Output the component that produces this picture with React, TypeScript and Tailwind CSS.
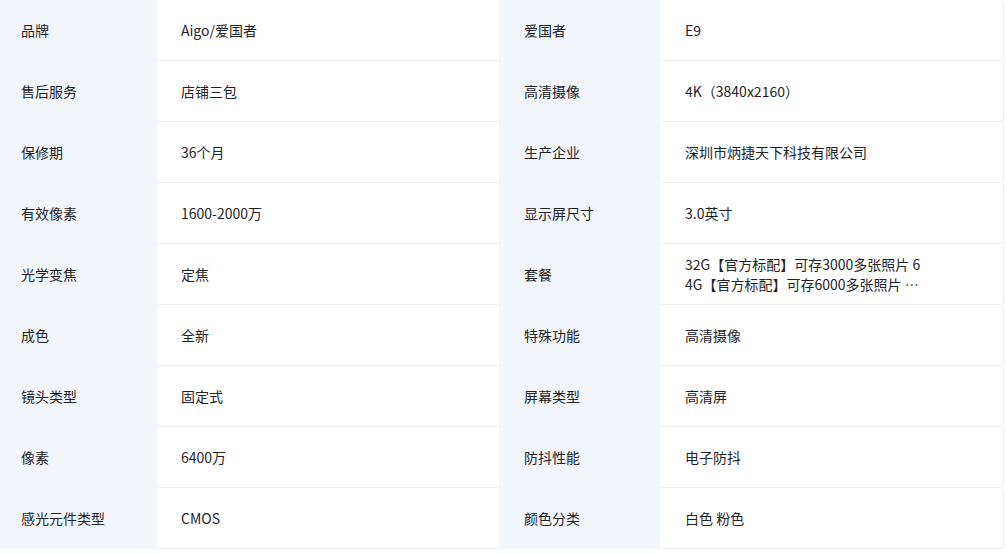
import React from "react";

const rows: [string, string, string, string][] = [
  ["品牌", "Aigo/爱国者", "爱国者", "E9"],
  ["售后服务", "店铺三包", "高清摄像", "4K（3840x2160）"],
  ["保修期", "36个月", "生产企业", "深圳市炳捷天下科技有限公司"],
  ["有效像素", "1600-2000万", "显示屏尺寸", "3.0英寸"],
  ["光学变焦", "定焦", "套餐", "32G【官方标配】可存3000多张照片 64G【官方标配】可存6000多张照片 128G【官方标配】可存12000多张照片"],
  ["成色", "全新", "特殊功能", "高清摄像"],
  ["镜头类型", "固定式", "屏幕类型", "高清屏"],
  ["像素", "6400万", "防抖性能", "电子防抖"],
  ["感光元件类型", "CMOS", "颜色分类", "白色 粉色"],
];

export default function App() {
  return (
    <div
      className="w-[1007px] h-[554px] bg-white text-[14px] text-[#1f2329]"
      style={{ fontFamily: '"Noto Sans CJK SC", "Noto Sans", sans-serif' }}
    >
      <div className="w-[1004px] flex flex-col">
        {rows.map((r, i) => (
          <div key={i} className="grid grid-cols-[157px_342px_161px_344px] h-[61px]">
            <div className="bg-[#f2f5f9] flex items-center pl-[21px]">{r[0]}</div>
            <div className="border-b border-[#eef0f3] flex items-center pl-[24px]">{r[1]}</div>
            <div className="bg-[#f2f5f9] flex items-center pl-[25px]">{r[2]}</div>
            <div className="border-b border-r border-[#eef0f3] rounded-r-[4px] flex items-center pl-[25px]">
              <span className="max-w-[236px] break-all line-clamp-2 leading-[20px]">{r[3]}</span>
            </div>
          </div>
        ))}
      </div>
    </div>
  );
}
